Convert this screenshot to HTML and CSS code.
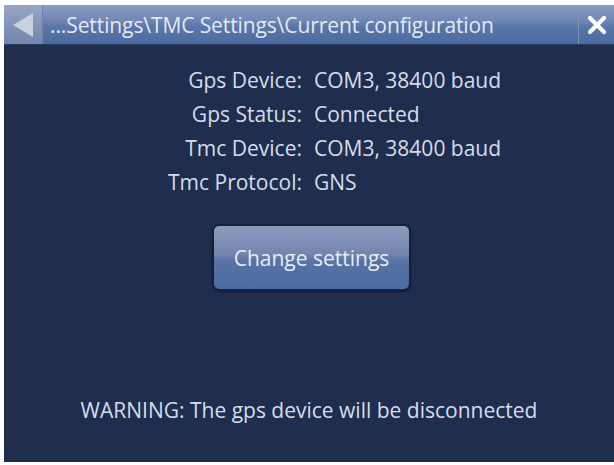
FILE: index.html
```html
<!DOCTYPE html>
<html>
<head>
<meta charset="utf-8">
<link rel="stylesheet" href="styles.css">
</head>
<body>
<div class="screen">
  <div class="titlebar">
    <div class="back">
      <svg width="24" height="26" viewBox="0 0 24 26"><polygon points="22,1 22,25 2,13" fill="#c9d1de"/></svg>
    </div>
    <div class="title">...Settings\TMC Settings\Current configuration</div>
    <div class="close">
      <svg width="20" height="20" viewBox="0 0 20 20"><path d="M3 3 L17 17 M17 3 L3 17" stroke="#ffffff" stroke-width="4.2" stroke-linecap="round"/></svg>
    </div>
  </div>
  <div class="content">
    <div class="info">
      <div class="label">Gps Device:</div><div class="value">COM3, 38400 baud</div>
      <div class="label">Gps Status:</div><div class="value">Connected</div>
      <div class="label">Tmc Device:</div><div class="value">COM3, 38400 baud</div>
      <div class="label">Tmc Protocol:</div><div class="value">GNS</div>
    </div>
    <button class="btn">Change settings</button>
    <div class="warning">WARNING: The gps device will be disconnected</div>
  </div>
</div>
</body>
</html>
```
FILE: styles.css
```css
html, body {
  margin: 0;
  padding: 0;
  background: #ffffff;
}
body {
  width: 614px;
  height: 465px;
  overflow: hidden;
  font-family: "Open Sans", "DejaVu Sans", sans-serif;
}
.screen {
  margin: 5px 0 3px 4px;
  height: 457px;
  display: flex;
  flex-direction: column;
  background: #1f2e4f;
}
.titlebar {
  height: 39px;
  display: flex;
  align-items: stretch;
  background: linear-gradient(to bottom, #8a9dc2 0%, #6f87b4 40%, #5a77aa 55%, #4b6aa0 100%);
  border-bottom: 1px solid #2a3d63;
}
.back {
  width: 38px;
  display: flex;
  align-items: center;
  justify-content: center;
  background: linear-gradient(to bottom, #98a6c3 0%, #8495b8 50%, #7385ad 100%);
  border-right: 1px solid #6b80aa;
}
.title {
  flex: 1;
  color: #e4e9f2;
  font-size: 21px;
  line-height: 41px;
  padding-left: 7px;
  white-space: nowrap;
  letter-spacing: -0.1px;
}
.close {
  width: 35px;
  display: flex;
  align-items: center;
  justify-content: center;
  border-left: 1px solid #7e93bd;
}
.content {
  flex: 1;
  display: flex;
  flex-direction: column;
  align-items: center;
  color: #d6dde9;
}
.info {
  display: grid;
  grid-template-columns: 298px auto;
  column-gap: 12px;
  row-gap: 0;
  align-self: flex-start;
  margin-top: 18px;
  font-size: 21px;
  line-height: 34px;
}
.label { text-align: right; }
.value { text-align: left; }
.btn {
  margin-top: 25px;
  margin-left: 5px;
  width: 199px;
  height: 67px;
  border-radius: 7px;
  border: 2px solid #15203a;
  background: linear-gradient(to bottom, #8b9cbd 0%, #7285ad 45%, #5873a5 55%, #4a6aa0 100%);
  color: #e8edf5;
  font-family: "Open Sans", "DejaVu Sans", sans-serif;
  font-size: 21px;
  padding: 0;
  box-shadow: 0 1px 2px rgba(0,0,0,0.4);
}
.warning {
  margin-top: auto;
  margin-bottom: 38px;
  font-size: 21px;
}
```
